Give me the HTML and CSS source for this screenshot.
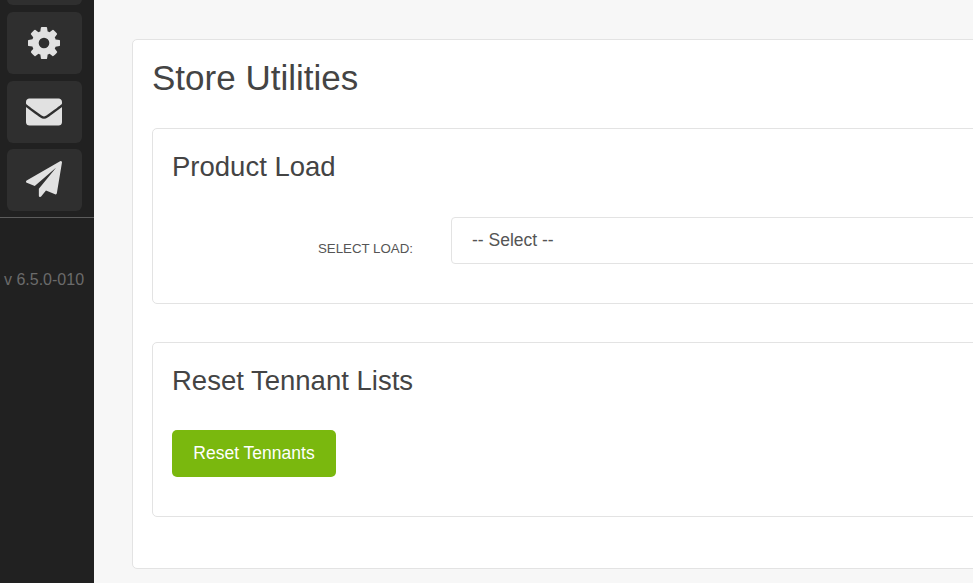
FILE: index.html
```html
<!DOCTYPE html>
<html lang="en">
<head>
<meta charset="utf-8">
<title>Store Utilities</title>
<link rel="stylesheet" href="styles.css">
</head>
<body>
<aside class="sidebar">
  <nav class="tiles">
    <a class="tile tile-cut"></a>
    <a class="tile"><svg class="icon-cog" viewBox="0 128 1536 1536"><path d="M1024 896q0-106-75-181t-181-75-181 75-75 181 75 181 181 75 181-75 75-181zm512-109v222q0 12-8 23t-20 13l-185 28q-19 54-39 91 35 50 107 138 10 12 10 25t-9 23q-27 37-99 108t-94 71q-12 0-26-9l-138-108q-44 23-91 38-16 136-29 186-7 28-36 28h-222q-14 0-24.500-8.500t-11.500-21.500l-28-184q-49-16-90-37l-141 107q-10 9-25 9-14 0-25-11-126-114-165-168-7-10-7-23 0-12 8-23 15-21 51-66.500t54-70.500q-27-50-41-99l-183-27q-13-2-21-12.500t-8-23.500v-222q0-12 8-23t19-13l186-28q14-46 39-92-40-57-107-138-10-12-10-24 0-10 9-23 26-36 98.500-107.500t94.500-71.500q13 0 26 10l138 107q44-23 91-38 16-136 29-186 7-28 36-28h222q14 0 24.500 8.500t11.500 21.500l28 184q49 16 90 37l142-107q9-9 24-9 13 0 25 10 129 119 165 170 7 8 7 22 0 12-8 23-15 21-51 66.500t-54 70.500q26 50 41 98l183 28q13 2 21 12.500t8 23.500z"/></svg></a>
    <a class="tile"><svg class="icon-mail" viewBox="0 64 512 384"><path d="M502.3 190.8c3.900-3.100 9.700-.2 9.700 4.700V400c0 26.500-21.500 48-48 48H48c-26.500 0-48-21.500-48-48V195.600c0-5 5.700-7.800 9.700-4.700 22.400 17.400 52.100 39.500 154.100 113.600 21.100 15.400 56.700 47.800 92.200 47.600 35.700.3 72-32.800 92.300-47.600 102-74.100 131.600-96.300 154-113.700zM256 320c23.200.4 56.600-29.200 73.400-41.400 132.700-96.300 142.800-104.700 173.400-128.700 5.800-4.500 9.200-11.500 9.200-18.900v-19c0-26.500-21.500-48-48-48H48C21.500 64 0 85.500 0 112v19c0 7.400 3.400 14.300 9.200 18.900 30.600 23.900 40.700 32.400 173.400 128.700 16.800 12.200 50.200 41.800 73.400 41.400z"/></svg></a>
    <a class="tile"><svg class="icon-plane" viewBox="0 0 1792 1792"><path d="M1764 11q33 24 27 64l-256 1536q-5 29-32 45-14 8-31 8-11 0-24-5l-453-185-242 295q-18 23-49 23-13 0-22-4-19-7-30.500-23.500t-11.500-36.500v-349l864-1059-1069 925-395-162q-37-14-40-55-2-40 32-59l1664-960q15-9 32-9 20 0 36 11z"/></svg></a>
  </nav>
  <div class="version">v 6.5.0-010</div>
</aside>
<main class="content">
  <section class="card">
    <h1 class="page-title">Store Utilities</h1>
    <section class="panel panel-load">
      <h2 class="panel-title">Product Load</h2>
      <div class="form-row">
        <label class="form-label" for="load">Select Load:</label>
        <select class="form-select" id="load"><option>-- Select --</option></select>
      </div>
    </section>
    <section class="panel panel-reset">
      <h2 class="panel-title">Reset Tennant Lists</h2>
      <button class="btn" type="button">Reset Tennants</button>
    </section>
  </section>
</main>
</body>
</html>
```
FILE: styles.css
```css
* { box-sizing: border-box; }
html, body { margin: 0; height: 100%; overflow: hidden; }
body {
  display: flex;
  font-family: "Liberation Sans", Arial, sans-serif;
  background: #f7f7f7;
  color: #444;
}
.sidebar {
  flex: 0 0 94px;
  height: 583px;
  background: #212121;
  overflow: hidden;
}
.tiles {
  display: flex;
  flex-direction: column;
  gap: 6.67px;
  align-items: center;
  padding: 0 6px 5.67px 0;
  border-bottom: 1px solid #5c5c5c;
  margin-top: -56.67px;
}
.tile {
  width: 75px;
  height: 62px;
  flex: none;
  background: #2f2f2f;
  border-radius: 6px;
  display: flex;
  align-items: center;
  justify-content: center;
}
.tile svg { fill: #e1e1e1; display: block; }
.icon-cog { width: 32px; height: 32px; }
.icon-mail { width: 36px; height: 28px; }
.icon-plane { width: 36px; height: 36px; margin-bottom: 2px; }
.version {
  margin-top: 53px;
  padding-right: 6px;
  text-align: center;
  font-size: 16px;
  line-height: 18px;
  color: #6b6b6b;
}
.content {
  flex: 1;
  min-width: 0;
  padding: 39px 0 0 38px;
}
.card {
  width: 1000px;
  height: 530px;
  background: #fff;
  border: 1px solid #e3e3e3;
  border-radius: 5px;
  padding: 19px 19px 0;
}
.page-title {
  margin: 0 0 31px;
  font-size: 35px;
  font-weight: 400;
  line-height: 38px;
}
.panel {
  border: 1px solid #e3e3e3;
  border-radius: 5px;
  padding: 19px;
}
.panel-load { height: 176px; margin-bottom: 38px; }
.panel-reset { height: 175px; }
.panel-title {
  margin: 0;
  font-size: 27.5px;
  font-weight: 400;
  line-height: 37px;
}
.form-row {
  display: flex;
  margin-top: 32px;
}
.form-label {
  flex: 0 0 241px;
  padding-top: 25px;
  text-align: right;
  font-size: 13.3px;
  line-height: 14px;
  text-transform: uppercase;
  color: #555;
}
.form-select {
  appearance: none;
  flex: 0 0 800px;
  margin-left: 38px;
  height: 47px;
  padding: 0 20px 2px;
  background: #fff;
  border: 1px solid #e3e3e3;
  border-radius: 4px;
  font: 17.5px "Liberation Sans", Arial, sans-serif;
  color: #555;
}
.btn {
  display: block;
  margin-top: 31px;
  width: 164px;
  height: 47px;
  padding: 0 0 2px;
  background: #7ab80e;
  border: 0;
  border-radius: 5px;
  color: #fff;
  font: 17.5px/18px "Liberation Sans", Arial, sans-serif;
}
```
